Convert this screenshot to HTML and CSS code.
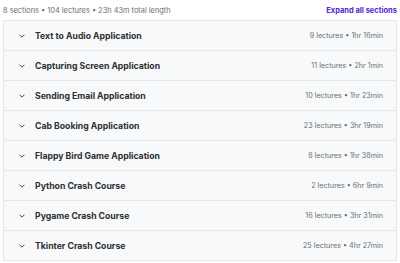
FILE: index.html
```html
<!DOCTYPE html>
<html lang="en">
<head>
  <meta charset="UTF-8">
  <title>Course content</title>
  <link rel="stylesheet" href="styles.css">
</head>
<body>
  <div class="content">
    <div class="summary">
      <span>8 sections • 104 lectures • 23h 43m total length</span>
      <button class="expand">Expand all sections</button>
    </div>

    <div class="sections">
      <div class="section">
        <div class="title"><svg class="chev" viewBox="0 0 6 4"><path d="M0.6 0.8 L3 3.2 L5.4 0.8"/></svg>Text to Audio Application</div>
        <div class="meta">9 lectures • 1hr 16min</div>
      </div>
      <div class="section">
        <div class="title"><svg class="chev" viewBox="0 0 6 4"><path d="M0.6 0.8 L3 3.2 L5.4 0.8"/></svg>Capturing Screen Application</div>
        <div class="meta">11 lectures • 2hr 1min</div>
      </div>
      <div class="section">
        <div class="title"><svg class="chev" viewBox="0 0 6 4"><path d="M0.6 0.8 L3 3.2 L5.4 0.8"/></svg>Sending Email Application</div>
        <div class="meta">10 lectures • 1hr 23min</div>
      </div>
      <div class="section">
        <div class="title"><svg class="chev" viewBox="0 0 6 4"><path d="M0.6 0.8 L3 3.2 L5.4 0.8"/></svg>Cab Booking Application</div>
        <div class="meta">23 lectures • 3hr 19min</div>
      </div>
      <div class="section">
        <div class="title"><svg class="chev" viewBox="0 0 6 4"><path d="M0.6 0.8 L3 3.2 L5.4 0.8"/></svg>Flappy Bird Game Application</div>
        <div class="meta">8 lectures • 1hr 38min</div>
      </div>
      <div class="section">
        <div class="title"><svg class="chev" viewBox="0 0 6 4"><path d="M0.6 0.8 L3 3.2 L5.4 0.8"/></svg>Python Crash Course</div>
        <div class="meta">2 lectures • 6hr 9min</div>
      </div>
      <div class="section">
        <div class="title"><svg class="chev" viewBox="0 0 6 4"><path d="M0.6 0.8 L3 3.2 L5.4 0.8"/></svg>Pygame Crash Course</div>
        <div class="meta">16 lectures • 3hr 31min</div>
      </div>
      <div class="section">
        <div class="title"><svg class="chev" viewBox="0 0 6 4"><path d="M0.6 0.8 L3 3.2 L5.4 0.8"/></svg>Tkinter Crash Course</div>
        <div class="meta">25 lectures • 4hr 27min</div>
      </div>
    </div>
  </div>
</body>
</html>
```

FILE: styles.css
```css
body {
  margin: 0;
  font-family: Inter, "Noto Sans", sans-serif;
  background-color: #fff;
  color: #2d2f31;
}
.content {
  padding: 0 3px;
}
.summary {
  display: flex;
  justify-content: space-between;
  align-items: center;
  height: 20px;
  font-size: 7.4px;
  color: #6a6f73;
}
.expand {
  border: none;
  background: none;
  padding: 0;
  font-family: inherit;
  font-size: 7.5px;
  font-weight: 700;
  color: #5624d0;
}
.sections {
  border: 1px solid #e4e8eb;
}
.section {
  display: flex;
  justify-content: space-between;
  align-items: center;
  height: 29px;
  padding: 0 13px 0 15px;
  background-color: #f7f9fa;
  border-bottom: 1px solid #e4e8eb;
}
.section:last-child {
  border-bottom: none;
}
.title {
  display: flex;
  align-items: center;
  font-size: 8.7px;
  font-weight: 700;
}
.chev {
  width: 6px;
  height: 4px;
  margin-right: 10px;
  fill: none;
  stroke: #2d2f31;
  stroke-width: 0.9;
}
.meta {
  font-size: 7.2px;
  color: #6a6f73;
}
```
